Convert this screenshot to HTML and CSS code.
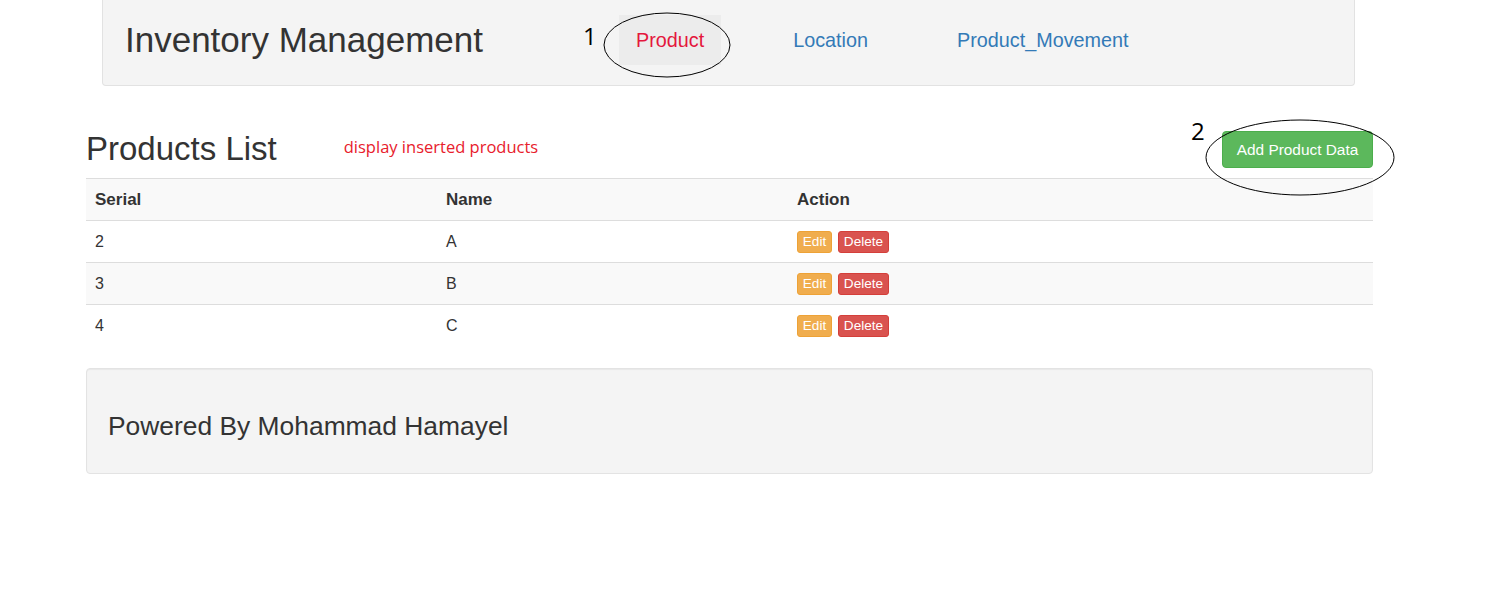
FILE: index.html
```html
<!DOCTYPE html>
<html>
<head>
<meta charset="utf-8">
<title>Inventory Management</title>
<link rel="stylesheet" href="styles.css">
</head>
<body>
<nav class="navbar">
  <div class="brand">Inventory Management</div>
  <ul class="nav">
    <li class="nav-item active"><a href="#">Product</a></li>
    <li class="nav-item"><a href="#">Location</a></li>
    <li class="nav-item"><a href="#">Product_Movement</a></li>
  </ul>
</nav>

<main class="container">
  <div class="list-head">
    <h2 class="title">Products List</h2>
    <span class="note">display inserted products</span>
    <button class="btn btn-success">Add Product Data</button>
  </div>

  <table class="table">
    <tr class="head-row">
      <th class="col-serial">Serial</th>
      <th class="col-name">Name</th>
      <th>Action</th>
    </tr>
    <tr>
      <td>2</td>
      <td>A</td>
      <td><div class="actions"><button class="btn-xs btn-warning">Edit</button><button class="btn-xs btn-danger">Delete</button></div></td>
    </tr>
    <tr class="striped">
      <td>3</td>
      <td>B</td>
      <td><div class="actions"><button class="btn-xs btn-warning">Edit</button><button class="btn-xs btn-danger">Delete</button></div></td>
    </tr>
    <tr>
      <td>4</td>
      <td>C</td>
      <td><div class="actions"><button class="btn-xs btn-warning">Edit</button><button class="btn-xs btn-danger">Delete</button></div></td>
    </tr>
  </table>

  <footer class="well">
    <h3 class="footer-text">Powered By Mohammad Hamayel</h3>
  </footer>
</main>

<svg class="annotations" width="1499" height="600" viewBox="0 0 1499 600">
  <ellipse cx="667" cy="45" rx="63" ry="32" fill="none" stroke="#000" stroke-width="1"/>
  <ellipse cx="1300" cy="157.5" rx="94" ry="37.5" fill="none" stroke="#000" stroke-width="1"/>
  <text x="583" y="45" class="anno-num">1</text>
  <text x="1191" y="140" class="anno-num">2</text>
</svg>
</body>
</html>
```

FILE: styles.css
```css
* {
  box-sizing: border-box;
}

html, body {
  margin: 0;
  padding: 0;
  background: #fff;
}

body {
  font-family: "Liberation Sans", Arial, Helvetica, sans-serif;
  color: #333;
  font-size: 15.4px;
  position: relative;
  width: 1499px;
  height: 600px;
  overflow: hidden;
}

/* Navbar */
.navbar {
  margin-left: 102px;
  width: 1253px;
  height: 86px;
  background: #f4f4f4;
  border: 1px solid #e2e2e2;
  border-top: none;
  border-radius: 0 0 4px 4px;
  display: flex;
  align-items: center;
}

.brand {
  font-size: 35px;
  line-height: 40px;
  margin-left: 22px;
  margin-top: -5px;
  color: #333;
  width: 479px;
}

.nav {
  list-style: none;
  margin: 0;
  padding: 0;
  display: flex;
  gap: 55px;
  margin-top: -5px;
  margin-left: 15px;
}

.nav-item a {
  display: block;
  padding: 11px 17px;
  font-size: 19.8px;
  line-height: 28px;
  color: #337ab7;
  text-decoration: none;
}

.nav-item.active a {
  background: #ececec;
  color: #e4173d;
}

/* Main content */
.container {
  margin-left: 86px;
  width: 1287px;
}

.list-head {
  display: flex;
  align-items: flex-start;
  height: 37px;
  margin-top: 45px;
  margin-bottom: 10px;
}

.title {
  margin: 0;
  font-size: 33px;
  line-height: 36px;
  font-weight: 500;
  color: #333;
}

.note {
  margin-left: 67px;
  margin-top: 5px;
  font-family: "Open Sans", "Noto Sans", sans-serif;
  font-size: 16.5px;
  line-height: 22px;
  color: #e8202c;
}

.btn {
  margin-left: auto;
  font-family: "Liberation Sans", Arial, sans-serif;
  font-size: 15.4px;
  line-height: 21px;
  padding: 7px 10px;
  height: 37px;
  width: 151px;
  white-space: nowrap;
  border-radius: 4px;
  border: 1px solid #4cae4c;
  cursor: pointer;
}

.btn-success {
  background: #5cb85c;
  color: #fff;
}

/* Table */
.table {
  width: 100%;
  border-collapse: collapse;
  border-spacing: 0;
}

.table th,
.table td {
  border-top: 1px solid #ddd;
  padding: 10px 9px;
  height: 42px;
  line-height: 21px;
  text-align: left;
  vertical-align: middle;
  font-size: 16px;
}

.table th {
  font-weight: bold;
  font-size: 17px;
}

.col-serial,
.col-name {
  width: 351px;
}

.head-row,
.striped {
  background: #f9f9f9;
}

.actions {
  display: flex;
  align-items: center;
  height: 21px;
  gap: 6px;
}

.btn-xs {
  flex: none;
  font-family: "Liberation Sans", Arial, sans-serif;
  font-size: 13.6px;
  line-height: 18px;
  padding: 1px 0;
  height: 22px;
  border-radius: 3px;
  color: #fff;
  text-align: center;
  cursor: pointer;
}

.btn-warning {
  background: #f0ad4e;
  border: 1px solid #eea236;
  width: 35px;
}

.btn-danger {
  background: #d9534f;
  border: 1px solid #d43f3a;
  width: 51px;
}

/* Footer */
.well {
  margin-top: 21px;
  background: #f4f4f4;
  border: 1px solid #e3e3e3;
  border-radius: 4px;
  padding: 21px;
  box-shadow: inset 0 1px 1px rgba(0, 0, 0, 0.05);
}

.footer-text {
  margin: 22px 0 11px;
  font-size: 26.4px;
  line-height: 29px;
  font-weight: 500;
  color: #333;
}

/* Annotations overlay */
.annotations {
  position: absolute;
  top: 0;
  left: 0;
  pointer-events: none;
}

.anno-num {
  font-family: "Open Sans", "Noto Sans", sans-serif;
  font-size: 24px;
  fill: #000;
}
```
